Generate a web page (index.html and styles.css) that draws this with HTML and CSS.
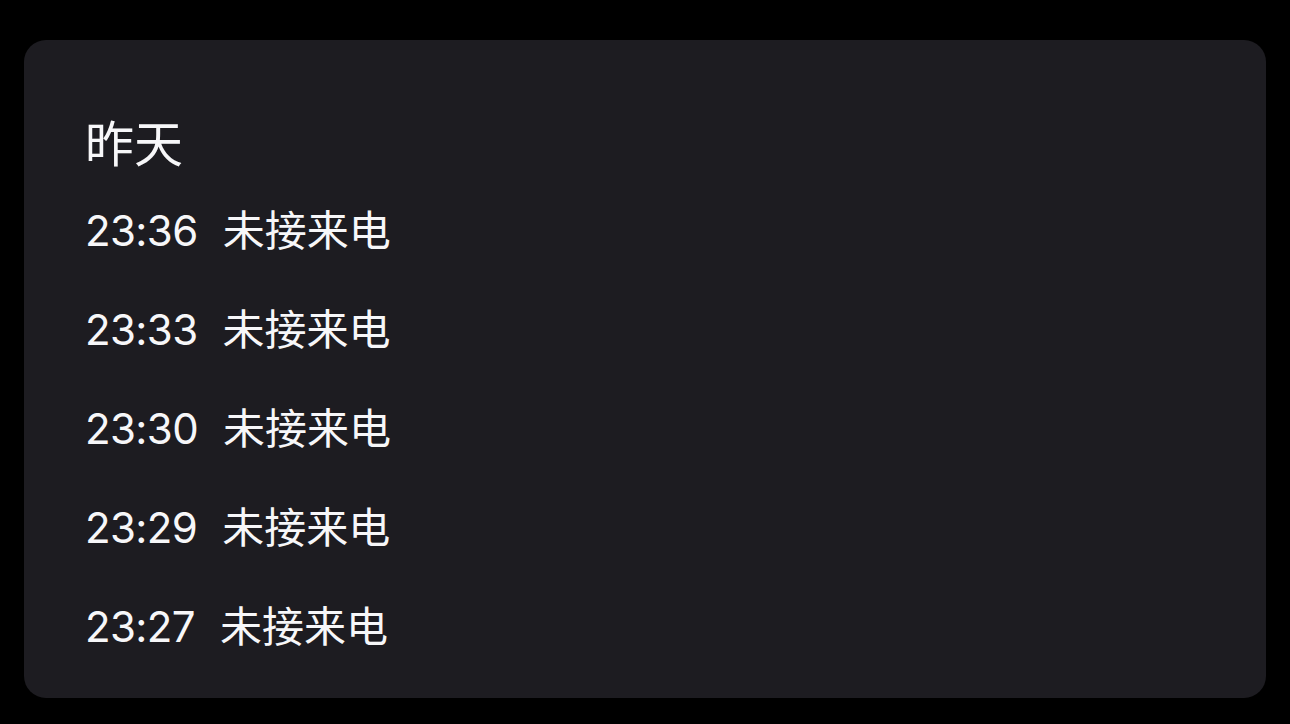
FILE: index.html
```html
<!DOCTYPE html>
<html lang="zh-CN">
<head>
<meta charset="utf-8">
<title>昨天</title>
<link rel="stylesheet" href="styles.css">
</head>
<body>
<div class="card">
  <div class="title">昨天</div>
  <ul class="calls">
    <li class="call"><span class="time">23:36</span><span class="label">未接来电</span></li>
    <li class="call"><span class="time">23:33</span><span class="label">未接来电</span></li>
    <li class="call"><span class="time">23:30</span><span class="label">未接来电</span></li>
    <li class="call"><span class="time">23:29</span><span class="label">未接来电</span></li>
    <li class="call"><span class="time">23:27</span><span class="label">未接来电</span></li>
  </ul>
</div>
</body>
</html>
```

FILE: styles.css
```css
html, body {
  margin: 0;
  padding: 0;
  background: #000;
}
body {
  width: 1290px;
  height: 724px;
  overflow: hidden;
  font-family: "Inter", "Noto Sans CJK SC", sans-serif;
  color: #f7f7f9;
}
.card {
  margin: 40px 24px 0 24px;
  height: 658px;
  box-sizing: border-box;
  background: #1d1c21;
  border-radius: 22px;
  padding: 71px 0 0 61px;
}
.title {
  font-size: 49px;
  line-height: 60px;
  height: 60px;
  font-family: "Noto Sans CJK SC", sans-serif;
}
.calls {
  list-style: none;
  margin: 7px 0 0 0;
  padding: 0;
}
.call {
  height: 99px;
  line-height: 99px;
  font-size: 42px;
  white-space: nowrap;
}
.time {
  letter-spacing: -0.6px;
}
.label {
  margin-left: 25px;
  font-family: "Noto Sans CJK SC", sans-serif;
}
```
